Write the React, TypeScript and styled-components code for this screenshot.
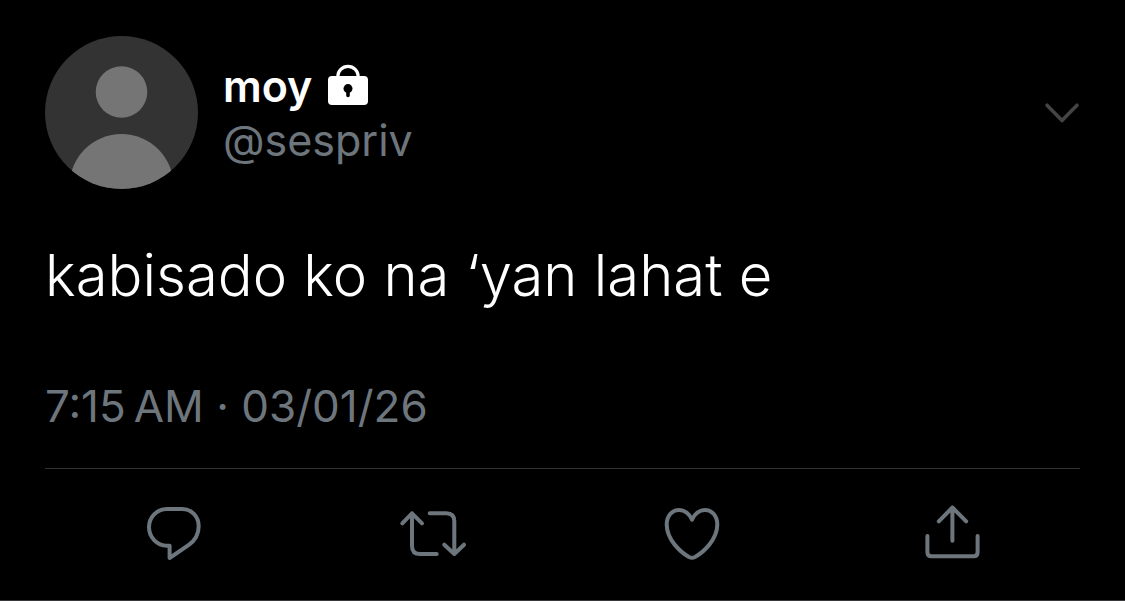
import React from "react";
import styled, { createGlobalStyle } from "styled-components";

const GlobalStyle = createGlobalStyle`
  *, *::before, *::after { box-sizing: border-box; }
  body {
    margin: 0;
    background: #000;
    color: #fff;
    font-family: Inter, "Liberation Sans", sans-serif;
  }
`;

const Post = styled.article`
  padding: 36px 45px;
  background: #000;
  border-bottom: 1px solid #38383a;
`;

const Header = styled.header`
  display: flex;
  align-items: center;
  gap: 25px;
`;

const Avatar = styled.svg`
  flex: none;
  width: 153px;
  height: 153px;
`;

const Author = styled.div`
  flex: 1;
  min-width: 0;
`;

const NameRow = styled.div`
  display: flex;
  align-items: center;
  gap: 16px;
`;

const Name = styled.h1`
  margin: 0;
  font-size: 43px;
  line-height: 54px;
  font-weight: 600;
`;

const Lock = styled.svg`
  flex: none;
  width: 40px;
  height: 44px;
`;

const Handle = styled.p`
  margin: 0;
  font-size: 43px;
  line-height: 54px;
  color: #6e767d;
`;

const IconButton = styled.button`
  display: flex;
  padding: 0;
  border: 0;
  background: none;
  color: ${(p) => p.color ?? "#6e767d"};
  cursor: pointer;
`;

const Body = styled.p`
  margin: 48px 0 0;
  font-size: 58px;
  line-height: 76px;
  font-weight: 300;
`;

const Stamp = styled.time`
  display: block;
  margin-top: 66px;
  font-size: 44px;
  line-height: 54px;
  color: #6e767d;
`;

const Actions = styled.footer`
  display: grid;
  grid-template-columns: repeat(4, 1fr);
  justify-items: center;
  margin-top: 35px;
  padding-top: 35px;
  border-top: 1px solid #2f3336;
`;

const Glyph = styled.svg`
  display: block;
  fill: none;
  stroke: currentColor;
  stroke-width: 4;
  stroke-linecap: round;
  stroke-linejoin: round;
`;

const actions = [
  {
    label: "Reply",
    width: 60,
    d: "M23 5H38C47.5 5 54.7 12.5 54.7 22.3C54.7 30 50.5 37 44.5 41.2L25.6 54V41.7H23C12.7 41.7 5 33 5 23.3C5 13 12.7 5 23 5Z",
  },
  {
    label: "Retweet",
    width: 72,
    d: "M5.3 19.3L15 9.3L25 19.3M15 9.3V42Q15 50 23 50H39.7M32.7 9.3H49.3Q57.3 9.3 57.3 17.3V50M47.3 40.7L57.3 50L67 40.7",
  },
  {
    label: "Like",
    width: 60,
    d: "M30 15.7C27.5 10 22.5 6 17 6C10 6 4.7 12 4.7 20.5C4.7 36 19 48.5 27 53Q30 54.5 33 53C41 48.5 55.3 36 55.3 20.5C55.3 12 50 6 43 6C37.5 6 32.5 10 30 15.7Z",
  },
  {
    label: "Share",
    width: 60,
    d: "M17.8 17.3L31.4 3.5L45.2 17.3M31.4 3.5V36.7M6.4 32V48.3Q6.4 52.3 10.4 52.3H52.6Q56.6 52.3 56.6 48.3V32",
  },
];

export default function App() {
  return (
    <>
      <GlobalStyle />
      <Post>
        <Header>
          <Avatar viewBox="0 0 153 153" aria-hidden="true">
            <clipPath id="avatar">
              <circle cx="76.5" cy="76.5" r="76.5" />
            </clipPath>
            <g clipPath="url(#avatar)">
              <rect width="153" height="153" fill="#333" />
              <circle cx="76.5" cy="56" r="25.8" fill="#757575" />
              <circle cx="76.5" cy="150" r="52" fill="#757575" />
            </g>
          </Avatar>
          <Author>
            <NameRow>
              <Name>moy</Name>
              <Lock viewBox="0 0 40 44" role="img" aria-label="Protected account">
                <path
                  d="M9.8 14V12.5A10.2 10.2 0 0 1 30.2 12.5V14"
                  fill="none"
                  stroke="#fff"
                  strokeWidth="3.2"
                />
                <rect y="12" width="40" height="29" rx="4" fill="#fff" />
                <circle cx="20" cy="24.6" r="4.5" fill="#000" />
                <path d="M20 25V31.5" stroke="#000" strokeWidth="3.6" strokeLinecap="round" />
              </Lock>
            </NameRow>
            <Handle>@sespriv</Handle>
          </Author>
          <IconButton type="button" aria-label="More" color="#444">
            <Glyph width="36" height="24" viewBox="0 0 36 24">
              <path d="M3 4.2L18 19.6L33 4.2" strokeWidth="3.6" />
            </Glyph>
          </IconButton>
        </Header>
        <Body>kabisado ko na ‘yan lahat e</Body>
        <Stamp dateTime="2026-01-03T07:15">{"7:15\u202fAM · 03/01/26"}</Stamp>
        <Actions>
          {actions.map((a) => (
            <IconButton key={a.label} type="button" aria-label={a.label}>
              <Glyph width={a.width} height="60" viewBox={`0 0 ${a.width} 60`}>
                <path d={a.d} />
              </Glyph>
            </IconButton>
          ))}
        </Actions>
      </Post>
    </>
  );
}
